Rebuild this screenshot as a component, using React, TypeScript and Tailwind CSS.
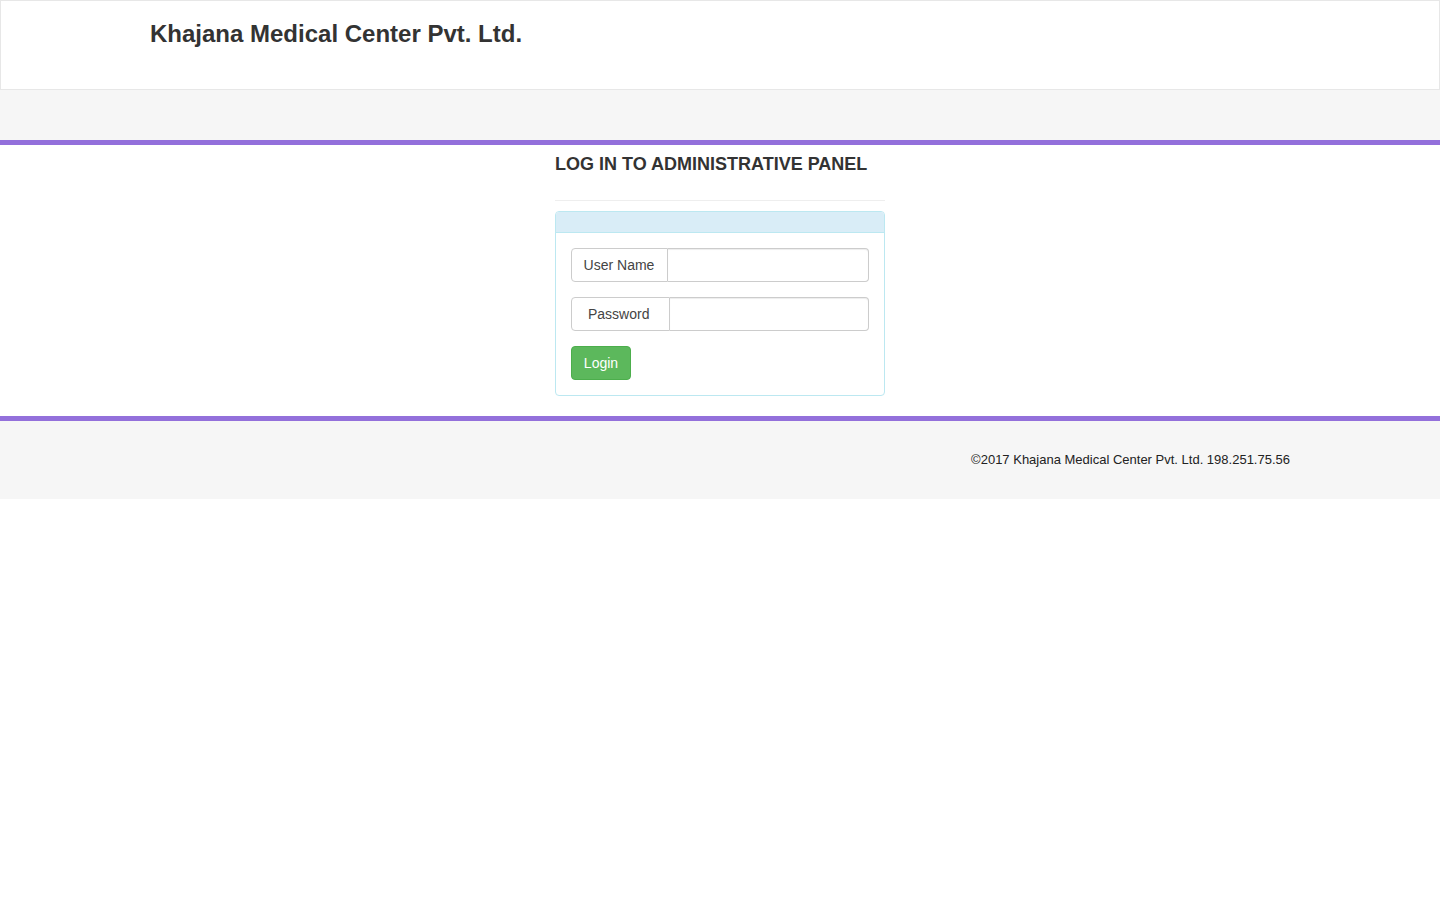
export default function App() {
  return (
    <div className="min-h-[900px] bg-white text-[14px] text-[#333]" style={{ fontFamily: '"Liberation Sans", Arial, sans-serif' }}>
      <header className="h-[90px] border border-[#e7e7e7] bg-white">
        <div className="mx-auto w-[1170px] px-[15px]">
          <h3 className="mt-[20px] text-[24px] font-bold leading-[1.1] text-[#333]">Khajana Medical Center Pvt. Ltd.</h3>
        </div>
      </header>
      <div className="h-[50px] bg-[#f6f6f6]" />
      <div className="h-[5px] bg-[#9370db]" />
      <main className="bg-white">
        <div className="mx-auto w-[1170px] px-[15px]">
          <div className="ml-[405px] w-[330px] pt-[10px] pb-[20px]">
            <h4 className="text-[18px] font-bold leading-[1.1] text-[#333]">LOG IN TO ADMINISTRATIVE PANEL</h4>
            <hr className="mt-[25px] mb-[10px] border-0 border-t border-[#eee]" />
            <div className="rounded-[4px] border border-[#bce8f1] bg-white">
              <div className="h-[21px] rounded-t-[3px] border-b border-[#bce8f1] bg-[#d9edf7]" />
              <div className="p-[15px]">
                <div className="flex h-[34px] w-[298px]">
                  <span className="flex w-[97px] shrink-0 items-center justify-center rounded-l-[4px] border border-[#ccc] bg-white pt-px pr-px text-[14px] text-[#444]">User Name</span>
                  <input className="h-[34px] min-w-0 flex-1 rounded-r-[4px] border border-l-0 border-[#ccc] bg-white px-3 shadow-[inset_0_1px_1px_rgba(0,0,0,0.075)] outline-none" />
                </div>
                <div className="mt-[15px] flex h-[34px] w-[298px]">
                  <span className="flex w-[99px] shrink-0 items-center rounded-l-[4px] border border-[#ccc] bg-white pt-px pl-[16px] text-[14px] text-[#444]">Password</span>
                  <input type="password" className="h-[34px] min-w-0 flex-1 rounded-r-[4px] border border-l-0 border-[#ccc] bg-white px-3 shadow-[inset_0_1px_1px_rgba(0,0,0,0.075)] outline-none" />
                </div>
                <button className="mt-[15px] flex h-[34px] w-[60px] items-center justify-center rounded-[4px] border border-[#4cae4c] bg-[#5cb85c] pt-px text-[14px] text-white">Login</button>
              </div>
            </div>
          </div>
        </div>
      </main>
      <div className="h-[5px] bg-[#9370db]" />
      <footer className="h-[78px] bg-[#f6f6f6]">
        <div className="mx-auto flex h-full w-[1170px] items-center justify-end px-[15px] pb-px">
          <p className="text-[13px] text-[#222]">©2017 Khajana Medical Center Pvt. Ltd. 198.251.75.56</p>
        </div>
      </footer>
    </div>
  );
}
